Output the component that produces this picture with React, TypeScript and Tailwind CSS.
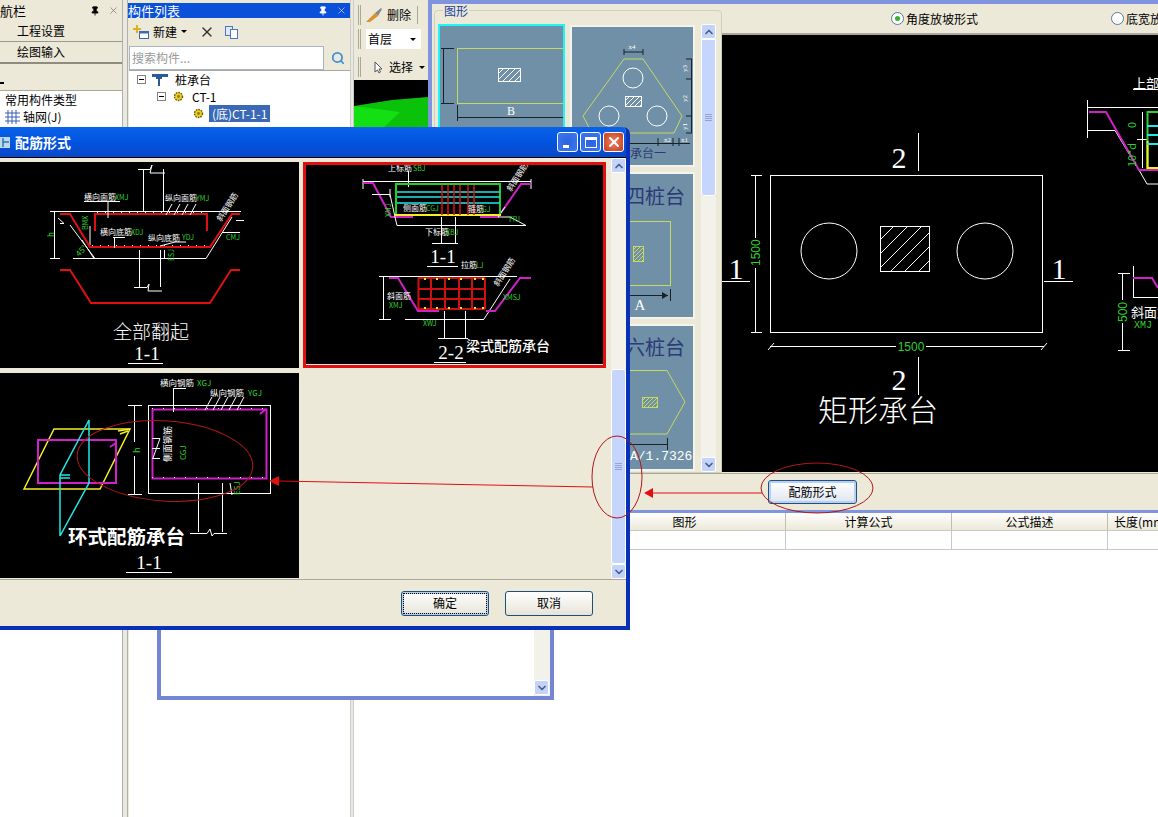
import { ChevronDown, ChevronUp, Pin, Search, X } from 'lucide-react'
import type { ReactNode } from 'react'

const CJK = '"Noto Sans CJK SC", sans-serif'
const SERIF = '"Liberation Serif", "Noto Sans CJK SC", serif'
const G = '#2fd12f'
const RED = '#e01010'
const MAG = '#d020c8'

function T({ x, y, s = 8, c = '#fff', a, r, w, f = CJK, children }: { x: number; y: number; s?: number; c?: string; a?: 'middle' | 'end'; r?: number; w?: number; f?: string; children: ReactNode }) {
  return (
    <text x={x} y={y} fontSize={s} fill={c} textAnchor={a} fontWeight={w} fontFamily={f} transform={r ? `rotate(${r} ${x} ${y})` : undefined}>
      {children}
    </text>
  )
}

function P({ d, c = '#fff', w = 1, dash }: { d: string; c?: string; w?: number; dash?: string }) {
  return <path d={d} fill="none" stroke={c} strokeWidth={w} strokeDasharray={dash} />
}

function Hatch({ x, y, w, h, step, c = '#fff' }: { x: number; y: number; w: number; h: number; step: number; c?: string }) {
  const lines = []
  for (let d = -h; d < w; d += step) lines.push(<line key={d} x1={d} y1={h} x2={d + h} y2={0} stroke={c} strokeWidth={1} />)
  return (
    <>
      <svg x={x} y={y} width={w} height={h}>{lines}</svg>
      <rect x={x + 0.5} y={y + 0.5} width={w} height={h} fill="none" stroke={c} />
    </>
  )
}

function ScrollBtn({ down }: { down?: boolean }) {
  return (
    <div className="flex h-[15px] w-[15px] shrink-0 items-center justify-center rounded-[2px] border border-white bg-[#c3d3fa]">
      {down ? <ChevronDown size={12} strokeWidth={3.5} className="text-[#4d6185]" /> : <ChevronUp size={12} strokeWidth={3.5} className="text-[#4d6185]" />}
    </div>
  )
}

function Grip() {
  return (
    <div className="flex flex-col gap-[1px]">
      <div className="h-px w-[7px] bg-[#8ea4d8]" />
      <div className="h-px w-[7px] bg-[#8ea4d8]" />
      <div className="h-px w-[7px] bg-[#8ea4d8]" />
      <div className="h-px w-[7px] bg-[#8ea4d8]" />
    </div>
  )
}

function DockTitle({ title, active }: { title: string; active?: boolean }) {
  return (
    <div className={`flex h-[15px] items-center text-[13px] leading-none ${active ? 'bg-[#0a50d8] text-white' : 'text-black'}`}>
      <span className="flex-1">{title}</span>
      <Pin size={10} className="mr-[8px]" fill="currentColor" />
      <X size={11} strokeWidth={1.2} className={`mr-[3px] ${active ? 'text-white' : 'text-[#555]'}`} />
    </div>
  )
}

function Gear() {
  return (
    <svg width="11" height="11" viewBox="0 0 11 11">
      <circle cx="5.5" cy="5.5" r="4" fill="#e8d020" stroke="#6a5a10" strokeWidth="1.4" strokeDasharray="1.6 1" />
      <circle cx="5.5" cy="5.5" r="1.4" fill="#8a7a10" />
    </svg>
  )
}

function Expander() {
  return (
    <div className="flex h-[9px] w-[9px] items-center justify-center border border-[#808080] bg-white">
      <div className="h-px w-[5px] bg-black" />
    </div>
  )
}

function ArrowDown() {
  return <div className="h-0 w-0 border-x-[3px] border-t-[3px] border-x-transparent border-t-black" />
}

function ToolGrip() {
  return <div className="h-[20px] w-[3px] shrink-0 border-x border-[#aca899]" />
}

function LeftNav() {
  return (
    <div className="flex h-full w-[122px] shrink-0 flex-col bg-[#ece9d8] pt-[3px]">
      <DockTitle title="航栏" />
      <div className="mt-[2px] flex h-[22px] items-center border-b border-[#9a9a8c] pl-[17px] text-[12px]">工程设置</div>
      <div className="flex h-[22px] items-center border-b-2 border-[#8c8c80] pl-[17px] text-[12px]">绘图输入</div>
      <div className="flex h-[26px] items-end pb-[6px]">
        <div className="h-[2px] w-[4px] bg-black" />
      </div>
      <div className="flex-1 border-t border-[#aca899] bg-white text-[12px]">
        <div className="pl-[5px] leading-[17px]">常用构件类型</div>
        <div className="flex items-center gap-[3px] pl-[5px] leading-[17px]">
          <svg width="15" height="14" viewBox="0 0 15 14">
            <P d="M3 0V14M7 0V14M11 0V14M0 3H15M0 7H15M0 11H15" c="#3a5fb0" />
          </svg>
          <span>轴网(J)</span>
        </div>
      </div>
    </div>
  )
}

function MiddlePanel() {
  return (
    <div className="flex h-full w-[222px] shrink-0 flex-col bg-[#ece9d8] pt-[3px]">
      <DockTitle title="构件列表" active />
      <div className="flex h-[27px] items-center gap-[4px] pl-[5px] text-[12px]">
        <svg width="16" height="14" viewBox="0 0 16 14">
          <path d="M3 0h2v3h3v2H5v3H3V5H0V3h3z" fill="#e0b020" />
          <rect x="6.5" y="6.5" width="9" height="7" fill="#fff" stroke="#3a6ab0" />
          <rect x="6.5" y="6.5" width="9" height="2" fill="#3a6ab0" />
        </svg>
        <span>新建</span>
        <ArrowDown />
        <X size={16} strokeWidth={2} className="ml-[8px] text-[#333]" />
        <svg width="15" height="14" viewBox="0 0 15 14" className="ml-[5px]">
          <rect x="1.5" y="1.5" width="7" height="9" fill="#dfe8f8" stroke="#4a78b8" />
          <rect x="6.5" y="4.5" width="7" height="9" fill="#fff" stroke="#4a78b8" />
        </svg>
      </div>
      <div className="flex h-[25px] items-center">
        <div className="ml-px flex h-[24px] w-[195px] items-center border border-[#a8b4c8] bg-white pl-[2px] text-[12px] text-[#999]">搜索构件...</div>
        <Search size={14} strokeWidth={3} className="ml-[7px] text-[#3f8fd8]" />
      </div>
      <div className="ml-px flex-1 border-t border-[#aca899] bg-white pl-[8px] text-[12px] leading-[17px]">
        <div className="flex h-[17px] items-center gap-[6px]">
          <Expander />
          <svg width="16" height="14" viewBox="0 0 16 14">
            <path d="M0 1h16v3H10v2H4V4H0z" fill="#2a5a98" />
            <rect x="6" y="6" width="2" height="7" fill="#2a5a98" />
          </svg>
          <span className="ml-px">桩承台</span>
        </div>
        <div className="flex h-[17px] items-center gap-[7px] pl-[20px]">
          <Expander />
          <Gear />
          <span className="ml-[1px]">CT-1</span>
        </div>
        <div className="flex h-[17px] items-center gap-[5px] pl-[56px]">
          <Gear />
          <span className="bg-[#3a69b5] px-[3px] text-white">(底)CT-1-1</span>
        </div>
      </div>
    </div>
  )
}

function RightBackground() {
  return (
    <div className="flex h-full min-w-0 flex-1 flex-col bg-white">
      <div className="h-[513px] bg-[#ece9d8] pt-[3px] text-[12px]">
        <div className="flex h-[23px] items-center gap-[4px] pl-[4px]">
          <ToolGrip />
          <svg width="18" height="16" viewBox="0 0 18 16">
            <path d="M1 15L10 6l3 3-8 6z" fill="#d89030" />
            <path d="M10 6l6-5 1 1-4 7z" fill="#888" />
          </svg>
          <span>删除</span>
          <div className="ml-[2px] h-[18px] w-px bg-[#aca899]" />
        </div>
        <div className="mt-[2px] flex h-[22px] items-center gap-[5px] pl-[4px]">
          <ToolGrip />
          <div className="flex h-[20px] w-[55px] items-center justify-between bg-white pl-[2px] pr-[5px]">
            首层
            <ArrowDown />
          </div>
        </div>
        <div className="mt-[5px] flex h-[24px] items-center gap-[6px] pl-[4px]">
          <ToolGrip />
          <svg width="9" height="13" viewBox="0 0 9 13" className="ml-[7px]">
            <path d="M1 1v10l2.5-2 1.5 3 1.5-1-1.5-3h3z" fill="#fff" stroke="#555" />
          </svg>
          <span>选择</span>
          <ArrowDown />
        </div>
        <div className="mt-px h-[47px] bg-black">
          <svg width="74" height="47" viewBox="354 80 74 47">
            <path d="M354 106L392 100L428 97V127H354z" fill="#0ac20a" />
            <path d="M354 106L400 112L384 127H354z" fill="#12e012" />
          </svg>
        </div>
      </div>
      <div className="flex h-[17px] text-[12px]">
        <div className="w-[230px] shrink-0" />
        <div className="flex w-[202px] shrink-0 items-center justify-center border-r border-[#bdbdb0] bg-linear-to-b from-white to-[#ece9d8]">图形</div>
        <div className="flex w-[166px] shrink-0 items-center justify-center border-r border-[#bdbdb0] bg-linear-to-b from-white to-[#ece9d8]">计算公式</div>
        <div className="flex w-[156px] shrink-0 items-center justify-center border-r border-[#bdbdb0] bg-linear-to-b from-white to-[#ece9d8]">公式描述</div>
        <div className="flex flex-1 items-center overflow-hidden whitespace-nowrap bg-linear-to-b from-white to-[#ece9d8] pl-[6px]">长度(mm)</div>
      </div>
      <div className="flex h-[20px] border-y border-[#c8c8c8]">
        <div className="w-[432px] shrink-0 border-r border-[#c8c8c8]" />
        <div className="w-[166px] shrink-0 border-r border-[#c8c8c8]" />
        <div className="w-[156px] shrink-0 border-r border-[#c8c8c8]" />
      </div>
    </div>
  )
}

function Thumb({ h, cyan, vb, children }: { h: number; cyan?: boolean; vb: string; children: ReactNode }) {
  return (
    <div className={`overflow-hidden border-2 bg-[#6f90a6] ${cyan ? 'border-[#1ff5f5]' : 'border-[#f5f4ea]'}`} style={{ height: h }}>
      <svg width="100%" height="100%" viewBox={vb} className="block">{children}</svg>
    </div>
  )
}

function ShapeGallery() {
  const Y = '#c8d860'
  const K = '#1a2228'
  const NAVY = '#2d3a78'
  return (
    <div className="relative ml-[2px] mt-[6px] h-[463px] w-[288px] rounded-t-[4px] border border-[#d0d0bf]">
      <span className="absolute left-[8px] top-[-6px] bg-[#ece9d8] px-px text-[12px] leading-none text-[#1a3fa0]">图形</span>
      <div className="flex gap-[5px] pl-[3px] pt-[13px]">
        <div className="flex w-[127px] flex-col gap-[5px]">
          <Thumb h={142} cyan vb="440 26 123 138">
            <P d="M563 48.5H457.5V103.5H563" c={Y} />
            <Hatch x={498} y={68} w={22} h={13} step={6} />
            <T x={511} y={115} s={12} a="middle" f={SERIF}>B</T>
            <P d="M441 48.5H454M441 103.5H454M443.5 48V103M457.5 105V121M457 117.5H563" c={K} />
          </Thumb>
        </div>
        <div className="mt-px flex w-[125px] flex-col gap-[5px]">
          <Thumb h={142} vb="572 27 121 138">
            <path d="M624 59H643L682 116L674 133H592L583 116Z" fill="none" stroke={Y} />
            <circle cx="633" cy="78" r="10" fill="none" stroke="#fff" />
            <circle cx="609" cy="116" r="10" fill="none" stroke="#fff" />
            <circle cx="657" cy="116" r="10" fill="none" stroke="#fff" />
            <Hatch x={625} y={96} w={16} h={10} step={5} />
            <P d="M624 52H643M624 49V55M643 49V55M691.5 59V133M686 59H692M686 79H692M686 116H692M686 133H692M592 143.5H690M658 138V146M673 138V146M679 138V146" c={K} />
            <T x={632} y={49} s={7} a="middle" f={SERIF}>x4</T>
            <T x={687} y={72} s={7} r={-90} f={SERIF}>y3</T>
            <T x={687} y={102} s={7} r={-90} f={SERIF}>y2</T>
            <T x={687} y={130} s={7} r={-90} f={SERIF}>y1</T>
            <T x={664} y={142} s={7} f={SERIF}>x2</T>
            <T x={681} y={142} s={7} f={SERIF}>x1</T>
            <T x={618} y={158} s={12} c={NAVY}>桩承台一</T>
          </Thumb>
          <Thumb h={147} vb="572 174 121 143">
            <T x={625} y={204} s={20} c={NAVY}>四桩台</T>
            <rect x="610.5" y="221.5" width="60" height="64" fill="none" stroke={Y} />
            <Hatch x={633} y={246} w={10} h={15} step={4} c={Y} />
            <P d="M600 295.5H668M670.5 289V301" c={K} />
            <path d="M662 292L668 295.5L662 299Z" fill={K} />
            <T x={640} y={310} s={15} a="middle" f={SERIF}>A</T>
          </Thumb>
          <Thumb h={147} vb="572 325 121 143">
            <T x={625} y={354} s={20} c={NAVY}>六桩台</T>
            <path d="M600 369.5H667L685 401L667 433H600" fill="none" stroke={Y} />
            <Hatch x={642} y={396} w={15} h={10} step={4} c={Y} />
            <P d="M600 443.5H667M667.5 437V449" c={K} />
            <T x={630} y={459} s={13} f={'"Liberation Mono", monospace'}>A/1.7326</T>
          </Thumb>
        </div>
        <div className="ml-px flex h-[448px] w-[15px] flex-col">
          <ScrollBtn />
          <div className="flex h-[157px] shrink-0 items-center justify-center rounded-b-[3px] border border-white bg-[#c5d5fb]"><Grip /></div>
          <div className="flex-1 bg-[#f3f2ea]" />
          <ScrollBtn down />
        </div>
      </div>
    </div>
  )
}

function Radio({ on, label }: { on?: boolean; label: string }) {
  return (
    <div className="flex items-center gap-[2px] whitespace-nowrap text-[12px]">
      <div className="flex h-[13px] w-[13px] items-center justify-center rounded-full border border-[#5a7a9a] bg-white">
        {on && <div className="h-[5px] w-[5px] rounded-full bg-[#36b030]" />}
      </div>
      {label}
    </div>
  )
}

function MainCad() {
  return (
    <svg width="436" height="437" viewBox="722 35 436 437" className="block bg-black">
      <rect x="770.5" y="175.5" width="272" height="157" fill="none" stroke="#fff" />
      <circle cx="829" cy="251" r="28" fill="none" stroke="#fff" />
      <circle cx="985" cy="251" r="28" fill="none" stroke="#fff" />
      <Hatch x={880} y={226} w={49} h={45} step={14} />
      <P d="M918.5 133V171M918.5 357V395M722 281.5H750M1044 281.5H1073" />
      <T x={899} y={168} s={30} a="middle" f={SERIF}>2</T>
      <T x={899} y={390} s={30} a="middle" f={SERIF}>2</T>
      <T x={736} y={279} s={30} a="middle" f={SERIF}>1</T>
      <T x={1059} y={279} s={30} a="middle" f={SERIF}>1</T>
      <P d="M755.5 175V238M755.5 268V332M751 175.5H762M751 332.5H762M770 346.5H896M926 346.5H1044M768 350L774 343M1041 350L1047 343" />
      <T x={760} y={266} s={12} c={G} r={-90} f={'"Liberation Sans", sans-serif'}>1500</T>
      <T x={911} y={351} s={12} c={G} a="middle" f={'"Liberation Sans", sans-serif'}>1500</T>
      <T x={818} y={421} s={30} w={300}>矩形承台</T>
      <T x={1133} y={88} s={13}>上部钢筋</T>
      <P d="M1133 89.5H1158M1087.5 100V138M1087.5 107.5H1158M1087 130.5H1115L1139 170L1147 184H1158M1142.5 112V168M1137 139.5H1147" />
      <P d="M1089 112H1106L1139 170H1158" c={MAG} w={2} />
      <P d="M1158 112H1147.5V168H1158" c={G} w={2} />
      <P d="M1147.5 141V168H1158" c="#f5f020" w={2} />
      <P d="M1147 126H1158M1147 135H1158M1147 144H1158" c="#20e8e8" w={2} />
      <T x={1136} y={128} s={11} c={G} r={-90}>0</T>
      <T x={1136} y={167} s={11} c={G} r={-90}>10*d</T>
      <P d="M1122.5 273V300M1122.5 323V351M1118 273.5H1130M1118 350.5H1130M1133.5 266V297M1133 297.5H1158" />
      <P d="M1133 278H1152L1158 288" c={MAG} w={2} />
      <T x={1127} y={322} s={12} c={G} r={-90} f={'"Liberation Sans", sans-serif'}>500</T>
      <T x={1131} y={317} s={13}>斜面筋</T>
      <T x={1134} y={328} s={10} c={G} f={'"Liberation Mono", monospace'}>XMJ</T>
    </svg>
  )
}

function ShapeWindow() {
  return (
    <div className="absolute left-[428px] top-0 h-[513px] w-[730px] border-b-[3px] border-l-[4px] border-t-[4px] border-[#7f93de] bg-[#ece9d8]">
      <div className="flex h-[469px]">
        <ShapeGallery />
        <div className="min-w-0 flex-1">
          <div className="flex h-[31px] items-center gap-[133px] border-b-2 border-[#aca899] pl-[169px]">
            <Radio on label="角度放坡形式" />
            <Radio label="底宽放坡形式" />
          </div>
          <MainCad />
        </div>
      </div>
      <div className="flex h-[37px] items-center border-t border-[#aca899] pl-[336px]">
        <button className="h-[24px] w-[89px] rounded-[3px] border border-[#1f4f88] bg-linear-to-b from-white to-[#dfe6f0] text-[12px] shadow-[inset_0_0_0_2px_#b8d0f0]">配筋形式</button>
      </div>
    </div>
  )
}

function XpBtn({ children, red }: { children: ReactNode; red?: boolean }) {
  return (
    <div className={`flex h-[20px] w-[21px] items-center justify-center rounded-[3px] border border-white ${red ? 'bg-[radial-gradient(circle,#e8866a,#c83a18)]' : 'bg-[radial-gradient(circle,#2a63e0,#3d78f0)]'}`}>
      {children}
    </div>
  )
}

function DrawingAll() {
  return (
    <svg width="299" height="206" viewBox="0 162 299 206" className="block bg-black">
      <P d="M143.5 169V211M163.5 169V211M138 169.5H150L152 165L150 173H165" />
      <P d="M60 211.5H241M54.5 211V258M50 211.5H60M50 258.5H60M70 225L95 258.5H206L232 217M73 258.5H206M90 226V245" />
      <P d="M60 223.5H64L58 218M236 220.5H244M222 232.5H240" />
      <P d="M60 214H70L90 247H210L232 214H240" c={RED} w={2} />
      <P d="M95 231V214H207V231" c={RED} w={2} />
      <P d="M97 212.5H205M92 245.5H208" dash="1 7" />
      <P d="M84 201.5H120M108 201V218M166 215L172 204M174 215L180 204M182 215L188 204M190 215L196 204M113 237.5H125M114.5 237V248M160 246L175 242H186" />
      <T x={84} y={200} s={8}>横向面筋</T><T x={115} y={200} s={7} c={G}>XMJ</T>
      <T x={165} y={201} s={8}>纵向面筋</T><T x={196} y={201} s={7} c={G}>YMJ</T>
      <T x={100} y={235} s={8}>横向底筋</T><T x={131} y={235} s={7} c={G}>XDJ</T>
      <T x={148} y={241} s={8}>纵向底筋</T><T x={182} y={240} s={7} c={G}>YDJ</T>
      <T x={226} y={240} s={7} c={G}>CMJ</T>
      <T x={221} y={222} s={8} r={-57}>斜面钢筋</T>
      <T x={88} y={230} s={7} c={G} r={-90}>BMX</T>
      <T x={79} y={257} s={8} c={G} r={-45}>45°</T>
      <T x={54} y={237} s={8} c={G} r={-90}>h</T>
      <T x={174} y={261} s={7} c={G} r={-90}>ESJ</T>
      <P d="M73 258.5H94L82 240M139.5 250V287M160.5 250V287M134 287.5H147L149 284L148 291H162M164.5 250V258" />
      <P d="M60 270H70L91 303H210L231 270H240" c={RED} w={2} />
      <T x={151} y={339} s={19} a="middle" w={300}>全部翻起</T>
      <T x={147} y={360} s={19} a="middle" f={SERIF}>1-1</T>
      <P d="M128 363.5H163" />
    </svg>
  )
}

function DrawingBeam() {
  const reds = [442, 448, 454, 460, 468, 474]
  const dots = [424, 436, 448, 460, 474, 482]
  return (
    <svg width="297" height="199" viewBox="306 166 297 199" className="block bg-black">
      <P d="M363 182.5H531M363 180V190M531 180V190M408.5 172V188" />
      <P d="M364 184H373L391 218H413M480 218H498L521 185H531" c={MAG} w={2} />
      <P d="M372 195.5H390L395 218L397 226.5H526L510 218H498L505 208M441.5 218V244M455.5 218V244M432 244.5H458M390 198V190" />
      <P d="M396 200V216H500V200" c="#f5f020" w={2} />
      <P d="M396 215V185H500V215" c="#22d022" w={2} />
      <P d="M397 193H500M397 198H500M397 204H500" c="#20e8e8" w={1.5} />
      {reds.map(x => <line key={x} x1={x} y1={186} x2={x} y2={216} stroke={RED} strokeWidth={1.5} />)}
      <T x={388} y={172} s={8}>上标筋</T><T x={413} y={172} s={7} c={G}>SBJ</T>
      <T x={403} y={212} s={8}>侧面筋</T><T x={426} y={212} s={7} c={G}>CGJ</T>
      <T x={468} y={213} s={8}>箍筋</T><T x={482} y={213} s={7} c={G}>GJ</T>
      <T x={425} y={236} s={8}>下标筋</T><T x={446} y={236} s={7} c={G}>XBJ</T>
      <T x={509} y={223} s={7} c={G}>FPJ</T>
      <T x={511} y={193} s={8} r={-57}>斜面钢筋</T>
      <T x={391} y={218} s={7} c={G} r={-90}>XMJ</T>
      <T x={443} y={264} s={19} a="middle" f={SERIF}>1-1</T>
      <P d="M427 267.5H458" />
      <P d="M387 277.5H517M383.5 277V320M379 277.5H391M379 320.5H391M405 320.5H484M484 320L510 280M444.5 312V339M465.5 312V339M438 339.5H468" />
      <P d="M389 279H398L418 312H439M486 312H495L520 279H531" c={MAG} w={2} />
      <P d="M418.5 279V310M431 279V310M445 279V310M459 279V310M472 279V310M485 279V310M418 279H485M418 290H485M418 300H485M418 310H485" c="#d01010" w={2} />
      {dots.map(x => <rect key={x} x={x} y={308} width={2} height={2} fill="#f5f020" />)}
      {dots.map(x => <rect key={x} x={x} y={279} width={2} height={2} fill="#f5f020" />)}
      <T x={461} y={269} s={8}>拉筋</T><T x={476} y={269} s={7} c={G}>LJ</T>
      <T x={387} y={300} s={8}>斜面筋</T><T x={389} y={309} s={7} c={G}>XMJ</T>
      <T x={503} y={301} s={7} c={G}>XMSJ</T>
      <T x={423} y={327} s={7} c={G}>XWJ</T>
      <T x={498} y={288} s={8} r={-57}>斜面钢筋</T>
      <T x={466} y={352} s={14} w={500}>梁式配筋承台</T>
      <T x={451} y={360} s={19} a="middle" f={SERIF}>2-2</T>
      <P d="M434 363.5H466" />
    </svg>
  )
}

function DrawingRing() {
  return (
    <svg width="299" height="205" viewBox="0 373 299 205" className="block bg-black">
      <path d="M24 489L54 429H130L100 489Z" fill="none" stroke="#f5f020" strokeWidth={1.5} />
      <P d="M118 431L130 429M120 434L128 431" c="#f5f020" w={1.5} />
      <rect x="38" y="440" width="78" height="43" fill="none" stroke={MAG} strokeWidth={2} />
      <P d="M110 447L116 443" c={MAG} w={2} />
      <P d="M60 536L89 483V420L60 475V536M60 475H70M60 478H70" c="#20e8e8" w={1.5} />
      <rect x="148.5" y="405.5" width="122" height="88" fill="none" stroke="#fff" />
      <rect x="152.5" y="409.5" width="114" height="69" fill="none" stroke={MAG} strokeWidth={2} />
      <P d="M152 408.5H266M152 477.5H266" dash="1 10" />
      <P d="M260 414L266 409" c={MAG} w={2} />
      <P d="M134.5 405V442M134.5 456V494M128 405.5H142M128 494.5H142M198.5 483V532M222.5 483V532M190 533.5H207L210 529L212 536L214 533.5H227M173 388.5H186M173.5 388V412M205 410L212 397M213 410L220 397M221 410L228 397M229 410L236 397M237 410L244 397M152 438.5H160L153 458M152 448.5H160M152 458.5H160M230 483L232 495" />
      <T x={160} y={386} s={8.5}>横向钢筋</T><T x={197} y={386} s={8} c={G}>XGJ</T>
      <T x={210} y={396} s={8.5}>纵向钢筋</T><T x={248} y={396} s={8} c={G}>YGJ</T>
      <T x={171} y={462} s={9} r={-90}>侧面钢筋</T>
      <T x={186} y={460} s={8} c={G} r={-90}>CGJ</T>
      <T x={140} y={453} s={9} c={G} r={-90}>h</T>
      <T x={240} y={495} s={8} c={G} r={-90}>ESJ</T>
      <T x={68} y={544} s={19.5} w={700}>环式配筋承台</T>
      <T x={149} y={569} s={19} a="middle" f={SERIF}>1-1</T>
      <P d="M126 572.5H172" />
    </svg>
  )
}

function Dialog() {
  return (
    <div className="absolute left-0 top-[127px] flex h-[503px] w-[630px] flex-col overflow-hidden rounded-tr-[7px] border-b-[4px] border-r-[4px] border-[#0831b8] bg-[#ece9d8]">
      <div className="flex h-[30px] shrink-0 items-center bg-linear-to-b from-[#0a62e8] via-[#0254e0] to-[#0a48c8] pr-[2px]">
        <svg width="11" height="13" viewBox="0 0 11 13" className="mr-[4px]">
          <rect x="0" y="1" width="10" height="11" fill="#bfd8ee" />
          <path d="M3 2V11M3 6H9" stroke="#2a78b0" strokeWidth="1.5" />
        </svg>
        <span className="flex-1 text-[14px] font-bold text-white">配筋形式</span>
        <div className="flex gap-[2px]">
          <XpBtn><div className="mr-[4px] mt-[9px] h-[3px] w-[6px] bg-white" /></XpBtn>
          <XpBtn><div className="h-[11px] w-[12px] border border-t-[3px] border-white" /></XpBtn>
          <XpBtn red><X size={16} strokeWidth={3} className="text-white" /></XpBtn>
        </div>
      </div>
      <div className="flex h-[423px] shrink-0 border-b border-t border-b-[#aca899] border-t-black">
        <div className="grid w-[607px] grid-cols-[299px_303px] grid-rows-[206px_205px] gap-x-[4px] gap-y-[5px] pt-[4px]">
          <DrawingAll />
          <div className="overflow-hidden border-[3px] border-[#e01010]"><DrawingBeam /></div>
          <DrawingRing />
        </div>
        <div className="ml-[4px] flex h-[421px] w-[15px] flex-col">
          <ScrollBtn />
          <div className="h-[196px] bg-[#f3f2ea]" />
          <div className="flex flex-1 items-center justify-center rounded-[3px] border border-white bg-[#c5d5fb]"><Grip /></div>
          <ScrollBtn down />
        </div>
      </div>
      <div className="flex flex-1 items-center gap-[16px] pl-[401px] text-[12px]">
        <button className="h-[25px] w-[88px] rounded-[3px] border border-[#1f4f78] bg-linear-to-b from-white to-[#e6e4d8] shadow-[inset_0_0_0_2px_#b8d0f0] outline-1 -outline-offset-3 outline-dotted outline-black">确定</button>
        <button className="h-[25px] w-[88px] rounded-[3px] border border-[#1f4f78] bg-linear-to-b from-white to-[#e6e4d8]">取消</button>
      </div>
    </div>
  )
}

function Annotations() {
  return (
    <svg width="1158" height="817" viewBox="0 0 1158 817" className="pointer-events-none absolute left-0 top-0">
      <ellipse cx="165" cy="461" rx="88" ry="40" fill="none" stroke="#b01818" transform="rotate(4 165 461)" />
      <ellipse cx="617" cy="477" rx="25" ry="41" fill="none" stroke="#b01818" />
      <ellipse cx="817" cy="488" rx="56" ry="25" fill="none" stroke="#b01818" />
      <line x1="278" y1="481" x2="593" y2="487" stroke={RED} />
      <path d="M269 481L279 476V486Z" fill={RED} />
      <line x1="653" y1="493" x2="762" y2="493" stroke={RED} />
      <path d="M644 493L653 488V498Z" fill={RED} />
    </svg>
  )
}

export default function App() {
  return (
    <div className="relative h-[817px] w-[1158px] overflow-hidden bg-white text-black" style={{ fontFamily: CJK }}>
      <div className="flex h-full">
        <LeftNav />
        <div className="w-[6px] shrink-0 border-x border-[#aab0b8] bg-[#ece9d8]" />
        <MiddlePanel />
        <div className="w-[4px] shrink-0 border-x border-[#c8ccd0] bg-[#ece9d8]" />
        <RightBackground />
      </div>
      {/* back window, only its lower part shows under the dialog */}
      <div className="absolute left-[157px] top-[300px] flex h-[400px] w-[397px] justify-end border-[4px] border-[#7385d3] bg-white">
        <div className="flex w-[16px] flex-col justify-end bg-[#f3f2ea] pb-px"><ScrollBtn down /></div>
      </div>
      <ShapeWindow />
      <Dialog />
      <Annotations />
    </div>
  )
}
